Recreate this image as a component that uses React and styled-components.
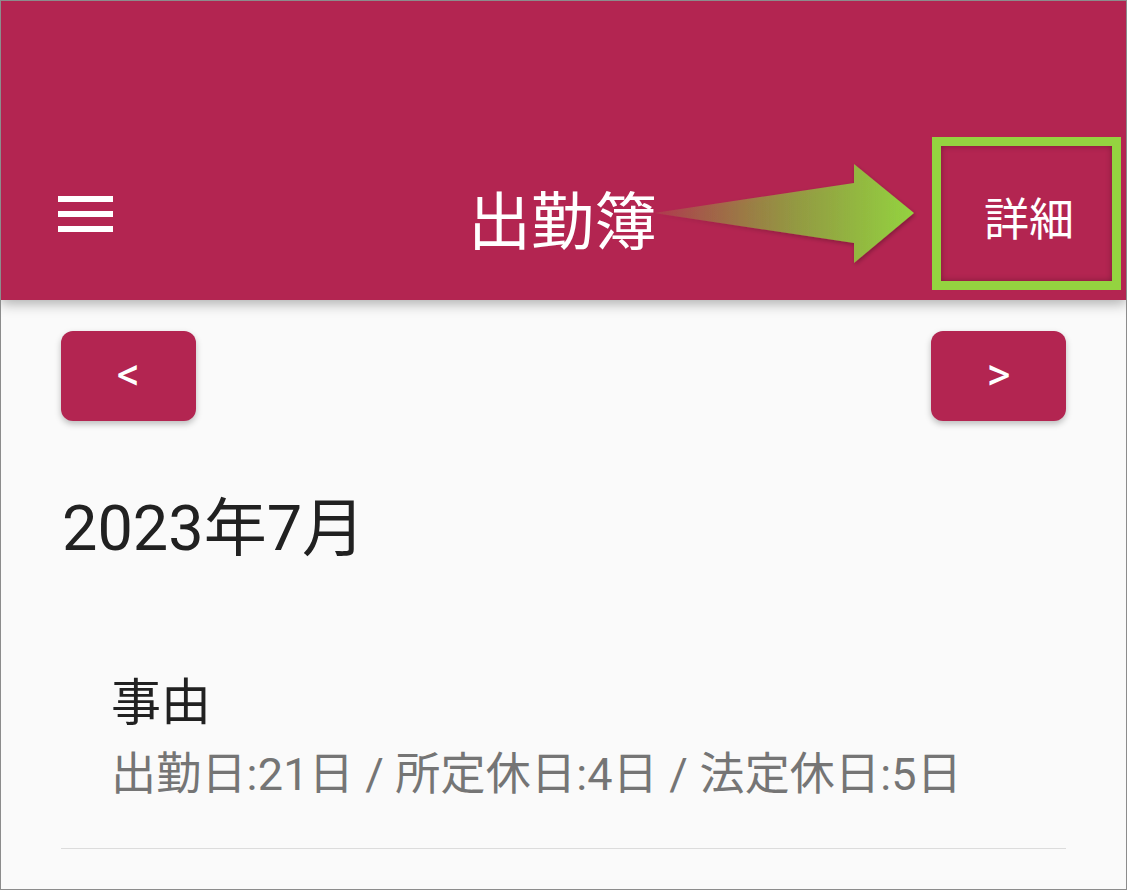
import React from 'react'
import styled, { createGlobalStyle } from 'styled-components'

const GlobalStyle = createGlobalStyle`
    html, body {
        margin: 0;
        padding: 0;
        background: #ffffff;
    }
    body {
        font-family: Roboto, "Noto Sans CJK JP", sans-serif;
    }
`

const Frame = styled.div`
    position: relative;
    width: 1127px;
    height: 890px;
    box-sizing: border-box;
    border: 1px solid #8c8c8c;
    background: #fafafa;
    overflow: hidden;
`
const AppBar = styled.header`
    position: relative;
    z-index: 2;
    height: 299px;
    background: #b32551;
    box-shadow: 0 4px 12px rgba(0, 0, 0, 0.3);
    display: flex;
    flex-direction: column;
    justify-content: flex-end;
`
const Toolbar = styled.div`
    height: 168px;
    display: flex;
    align-items: center;
    padding: 0 52px 0 57px;
`
const MenuButton = styled.div`
    width: 55px;
    display: flex;
    flex-direction: column;
    gap: 9px;
    margin-top: -4px;
    span {
        display: block;
        height: 6px;
        background: #ffffff;
    }
`
const Title = styled.h1`
    flex: 1;
    margin: 0;
    padding-left: 28px;
    text-align: center;
    color: #ffffff;
    font-family: "Noto Sans CJK JP", sans-serif;
    font-size: 63px;
    font-weight: 400;
    line-height: 1;
`
const Action = styled.div`
    color: #ffffff;
    font-family: "Noto Sans CJK JP", sans-serif;
    font-size: 45px;
    font-weight: 400;
`
const Highlight = styled.div`
    position: absolute;
    left: 931px;
    top: 136px;
    width: 189px;
    height: 153px;
    box-sizing: border-box;
    border: 9px solid #94d340;
    box-shadow: inset 0 0 6px rgba(0, 0, 0, 0.3);
    z-index: 3;
`
const Arrow = styled.svg`
    position: absolute;
    left: 651px;
    top: 160px;
    z-index: 3;
    overflow: visible;
`
const Content = styled.main`
    padding: 31px 60px 0;
`
const NavRow = styled.div`
    display: flex;
    justify-content: space-between;
`
const NavButton = styled.button`
    width: 135px;
    height: 90px;
    border: none;
    border-radius: 12px;
    background: #b32551;
    color: #ffffff;
    font-family: Roboto, sans-serif;
    font-size: 46px;
    font-weight: 400;
    box-shadow: 0 3px 6px rgba(0, 0, 0, 0.25);
    display: flex;
    align-items: center;
    justify-content: center;
    padding: 0 0 4px;
`
const Month = styled.div`
    margin-top: 73px;
    font-size: 63px;
    line-height: 70px;
    color: #212121;
    padding-left: 1px;
`
const Item = styled.div`
    margin-top: 107px;
    padding: 0 0 43px 50px;
    border-bottom: 1px solid #dcdcdc;
`
const ItemTitle = styled.div`
    font-size: 50px;
    line-height: 64px;
    color: #212121;
`
const ItemSub = styled.div`
    margin-top: 10px;
    font-size: 45px;
    letter-spacing: 0.2px;
    line-height: 60px;
    color: #757575;
`

const App = () => {
    return (
        <>
            <GlobalStyle />
            <Frame>
                <AppBar>
                    <Toolbar>
                        <MenuButton>
                            <span />
                            <span />
                            <span />
                        </MenuButton>
                        <Title>出勤簿</Title>
                        <Action>詳細</Action>
                    </Toolbar>
                </AppBar>

                {/* annotation overlay */}
                <Arrow width="265" height="106" viewBox="0 0 265 106">
                    <defs>
                        <linearGradient id="arrowFill" x1="0" y1="0" x2="1" y2="0">
                            <stop offset="0" stopColor="#94d340" stopOpacity="0.1" />
                            <stop offset="0.55" stopColor="#8fc640" stopOpacity="0.7" />
                            <stop offset="1" stopColor="#94d340" stopOpacity="1" />
                        </linearGradient>
                        <filter id="arrowShadow" x="-10%" y="-20%" width="120%" height="140%">
                            <feDropShadow dx="1" dy="2" stdDeviation="2" floodColor="#000" floodOpacity="0.3" />
                        </filter>
                    </defs>
                    <polygon
                        points="2,52 202,22 202,3 262,52 202,102 202,82"
                        fill="url(#arrowFill)"
                        filter="url(#arrowShadow)"
                    />
                </Arrow>
                <Highlight />

                <Content>
                    <NavRow>
                        <NavButton>&lt;</NavButton>
                        <NavButton>&gt;</NavButton>
                    </NavRow>
                    <Month>2023年7月</Month>
                    <Item>
                        <ItemTitle>事由</ItemTitle>
                        <ItemSub>出勤日:21日 / 所定休日:4日 / 法定休日:5日</ItemSub>
                    </Item>
                </Content>
            </Frame>
        </>
    )
}

export default App
